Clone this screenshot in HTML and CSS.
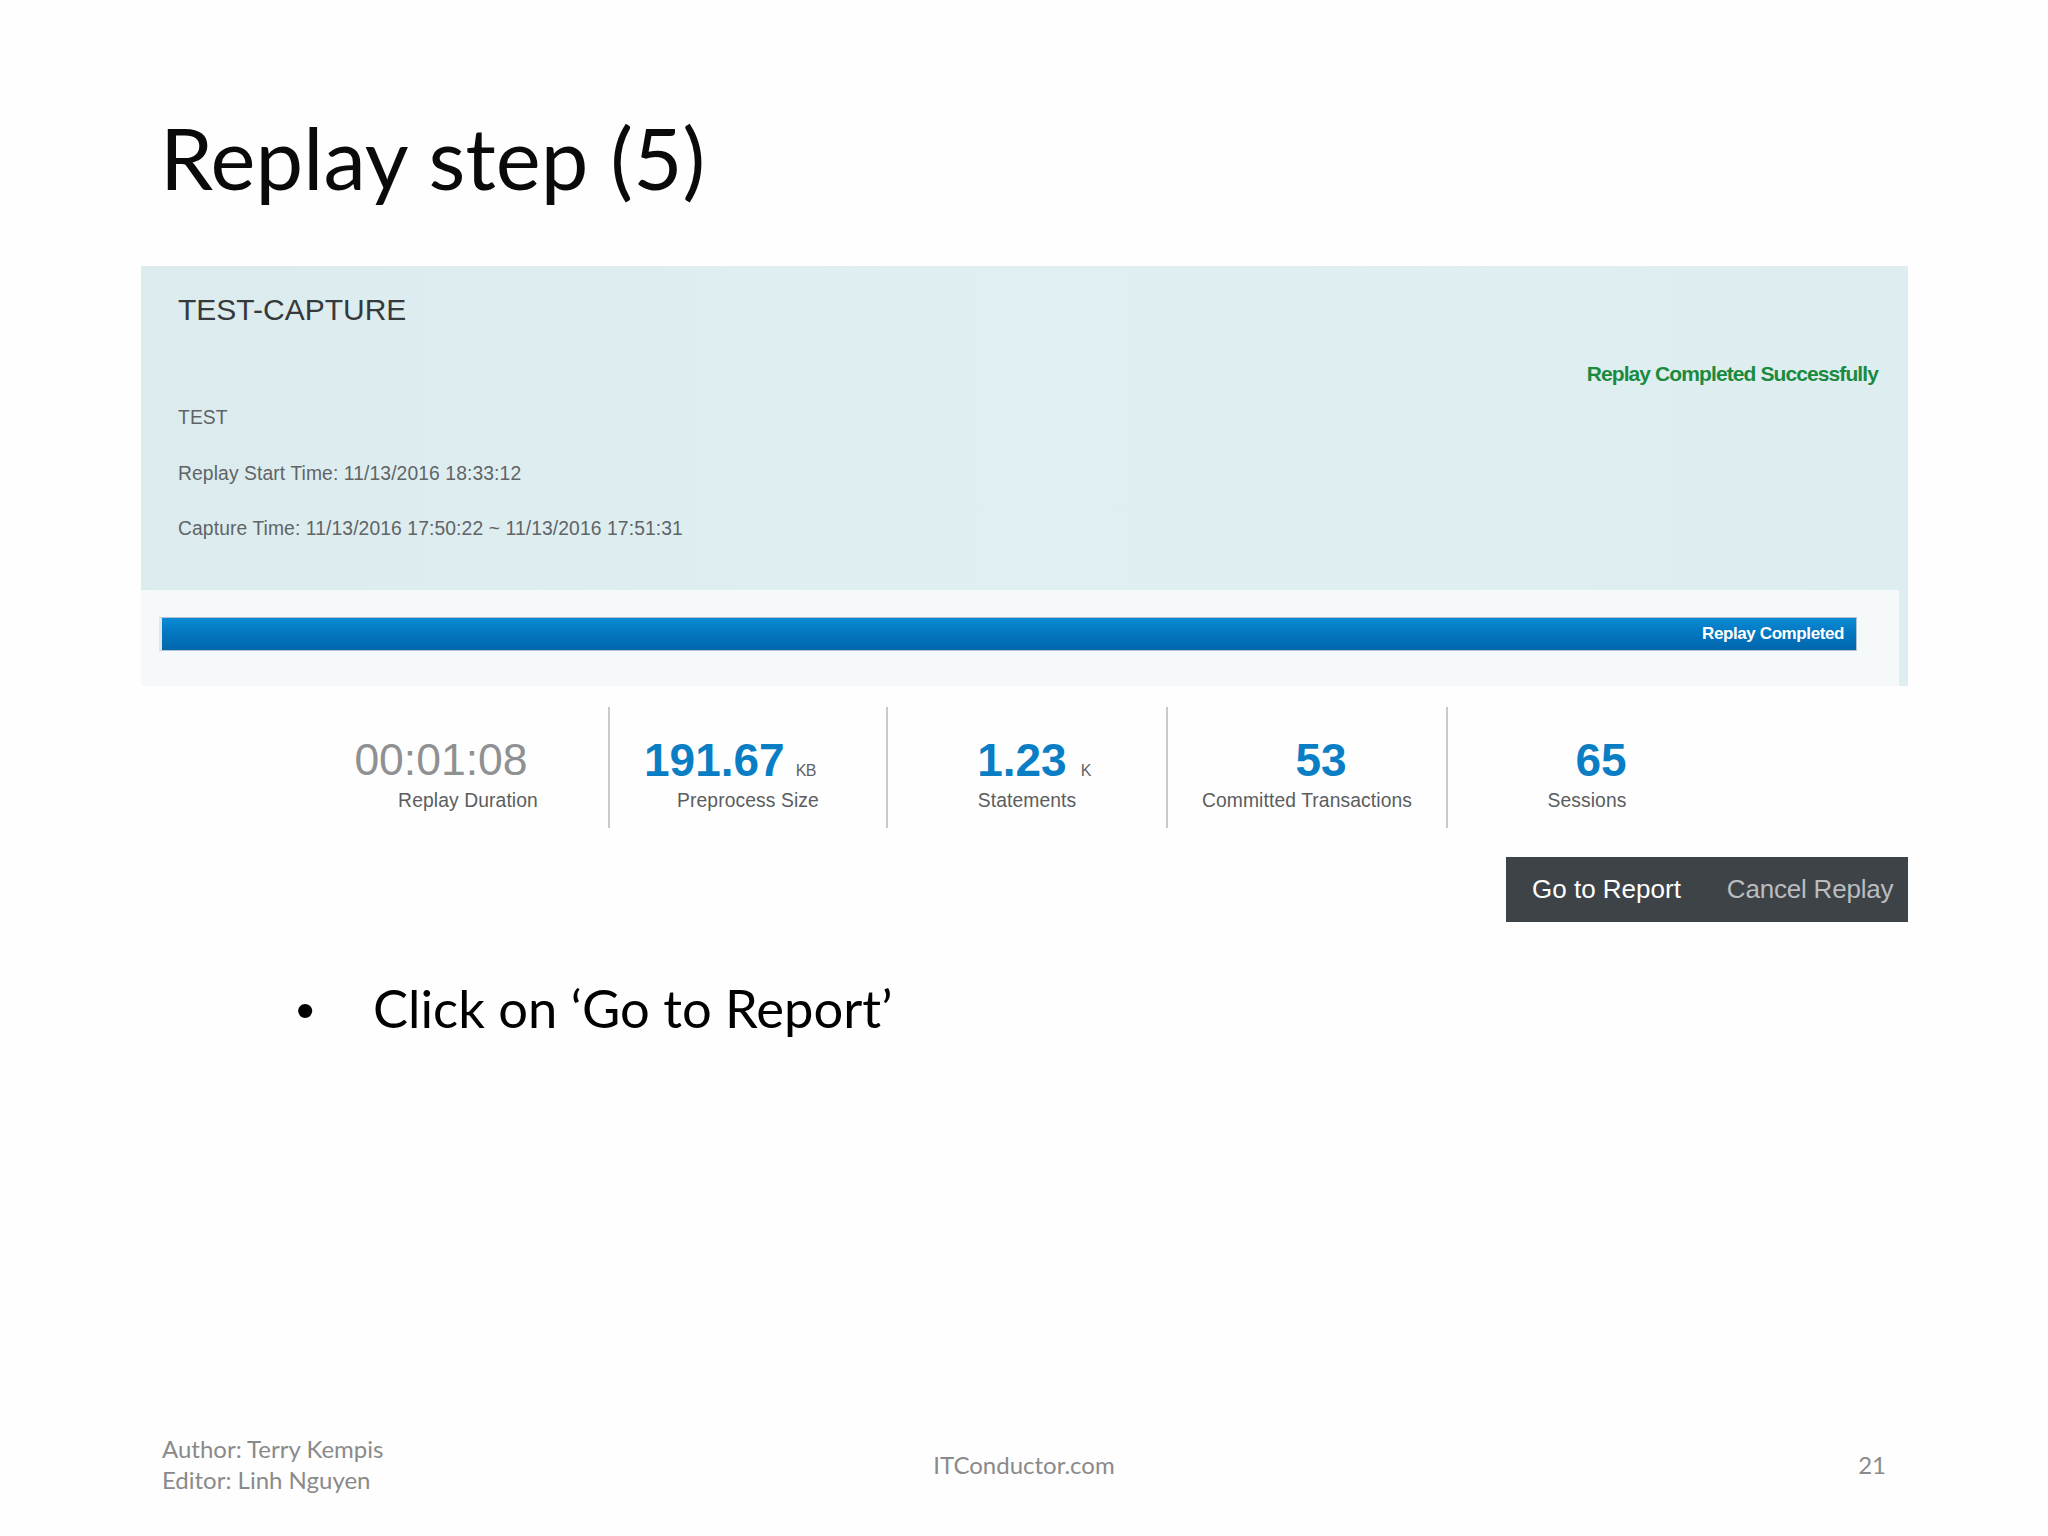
FILE: index.html
```html
<!DOCTYPE html>
<html lang="en">
<head>
<meta charset="utf-8">
<title>Replay step (5)</title>
<link rel="stylesheet" href="styles.css">
</head>
<body>
<div class="slide">
  <h1 class="title">Replay step (5)</h1>

  <section class="panel">
    <div class="panel-head">
      <div class="cap-name">TEST-CAPTURE</div>
      <div class="status">Replay Completed Successfully</div>
      <div class="meta">
        <div class="meta-line">TEST</div>
        <div class="meta-line">Replay Start Time: 11/13/2016 18:33:12</div>
        <div class="meta-line">Capture Time: 11/13/2016 17:50:22 ~ 11/13/2016 17:51:31</div>
      </div>
    </div>
    <div class="strip">
      <div class="bar"><span class="bar-label">Replay Completed</span></div>
    </div>
  </section>

  <div class="stats">
    <div class="stat">
      <div class="value shift-a"><span class="num num-gray">00:01:08</span></div>
      <div class="label">Replay Duration</div>
    </div>
    <div class="stat">
      <div class="value shift-b"><span class="num">191.67</span><span class="unit">KB</span></div>
      <div class="label">Preprocess Size</div>
    </div>
    <div class="stat">
      <div class="value shift-c"><span class="num">1.23</span><span class="unit unit-k">K</span></div>
      <div class="label">Statements</div>
    </div>
    <div class="stat">
      <div class="value shift-d"><span class="num">53</span></div>
      <div class="label">Committed Transactions</div>
    </div>
    <div class="stat">
      <div class="value shift-d"><span class="num">65</span></div>
      <div class="label">Sessions</div>
    </div>
  </div>

  <div class="actions">
    <div class="btn-group">
      <span class="btn btn-primary">Go to Report</span>
      <span class="btn btn-muted">Cancel Replay</span>
    </div>
  </div>

  <div class="bullet">
    <span class="dot">•</span>
    <span class="bullet-text">Click on ‘Go to Report’</span>
  </div>

  <footer class="footer">
    <div class="foot-left">
      <div>Author: Terry Kempis</div>
      <div>Editor: Linh Nguyen</div>
    </div>
    <div class="foot-center">ITConductor.com</div>
    <div class="foot-right">21</div>
  </footer>
</div>
</body>
</html>
```

FILE: styles.css
```css
* { box-sizing: border-box; }

html, body {
  margin: 0;
  padding: 0;
  background: #ffffff;
}

.slide {
  width: 2048px;
  height: 1536px;
  overflow: hidden;
  display: flex;
  flex-direction: column;
  background: #fefefe;
  font-family: "Lato", "Open Sans", sans-serif;
  color: #000;
}

/* ---------- title ---------- */
.title {
  margin: 107px 0 0 160px;
  font-family: "Lato", "Open Sans", sans-serif;
  font-weight: 400;
  font-size: 85px;
  line-height: 100px;
  letter-spacing: 0.1px;
  color: #0a0a0a;
}

/* ---------- capture panel ---------- */
.panel {
  margin: 59px 0 0 141px;
  width: 1767px;
  height: 420px;
  background: #deedf0;
  font-family: "Liberation Sans", Arial, sans-serif;
}

.panel-head {
  height: 324px;
  padding: 24px 30px 0 37px;
  background: linear-gradient(90deg, #dcecee 0%, #e0eff2 50%, #deedf0 100%);
}

.cap-name {
  font-size: 30px;
  line-height: 40px;
  color: #363a3c;
}

.status {
  margin-top: 30px;
  text-align: right;
  font-size: 21px;
  line-height: 28px;
  font-weight: 700;
  letter-spacing: -0.9px;
  color: #1b8a3f;
}

.meta {
  margin-top: 2px;
}

.meta-line {
  font-size: 19.3px;
  line-height: 55.5px;
  color: #606466;
  letter-spacing: 0.1px;
}

.strip {
  width: 1758px;
  height: 96px;
  padding: 27px 42px 0 18px;
  background: #f6f9fa;
}

.bar {
  height: 34px;
  display: flex;
  justify-content: flex-end;
  align-items: center;
  padding-right: 12px;
  border: 1px solid #b6c3cf;
  border-left: 3px solid #dfe6ec;
  background: linear-gradient(180deg, #0b8ad3 0%, #0478c2 45%, #0166ab 100%);
}

.bar-label {
  font-size: 17px;
  font-weight: 700;
  letter-spacing: -0.4px;
  color: #ffffff;
}

/* ---------- stats ---------- */
.stats {
  margin: 21px 0 0 328px;
  display: grid;
  grid-template-columns: 280px 278px 280px 280px 280px;
  height: 121px;
  font-family: "Liberation Sans", Arial, sans-serif;
}

.stat {
  padding-top: 28px;
  text-align: center;
}

.stat + .stat {
  border-left: 2px solid #c8cacc;
}

.value {
  display: flex;
  justify-content: center;
  align-items: baseline;
  height: 50px;
  line-height: 50px;
}

.shift-a { padding-right: 54px; }
.shift-b { padding-right: 36px; }
.shift-c { padding-left: 14px; }
.shift-d { padding-left: 28px; }

.num {
  font-size: 46px;
  font-weight: 700;
  color: #0a7ec5;
}

.num-gray {
  font-size: 44.5px;
  font-weight: 400;
  color: #8e9092;
}

.unit {
  margin-left: 11px;
  font-size: 16px;
  color: #5e6266;
  letter-spacing: -0.5px;
}

.unit-k { margin-left: 14px; }

.label {
  margin-top: 4px;
  font-size: 19.3px;
  line-height: 24px;
  color: #5a5d60;
  letter-spacing: 0.1px;
}

/* ---------- action buttons ---------- */
.actions {
  margin: 29px 140px 0 0;
  display: flex;
  justify-content: flex-end;
}

.btn-group {
  display: flex;
  width: 402px;
  height: 65px;
  background: #3e4347;
  font-family: "Liberation Sans", Arial, sans-serif;
  font-size: 26px;
  line-height: 65px;
}

.btn { white-space: nowrap; }

.btn-primary {
  padding-left: 26px;
  color: #ffffff;
}

.btn-muted {
  margin-left: 46px;
  color: #b9bdc0;
  letter-spacing: -0.2px;
}

/* ---------- bullet ---------- */
.bullet {
  margin: 54px 0 0 296px;
  display: flex;
  align-items: baseline;
  font-size: 52.5px;
  line-height: 64px;
}

.dot {
  width: 77px;
  font-family: "Liberation Sans", Arial, sans-serif;
}

.bullet-text {
  letter-spacing: 0;
}

/* ---------- footer ---------- */
.footer {
  margin-top: auto;
  padding: 0 162px 41px 162px;
  display: grid;
  grid-template-columns: 1fr auto 1fr;
  align-items: center;
  font-size: 24px;
  line-height: 31px;
  color: #8a8a8a;
}

.foot-center { text-align: center; }
.foot-right { text-align: right; }
```
